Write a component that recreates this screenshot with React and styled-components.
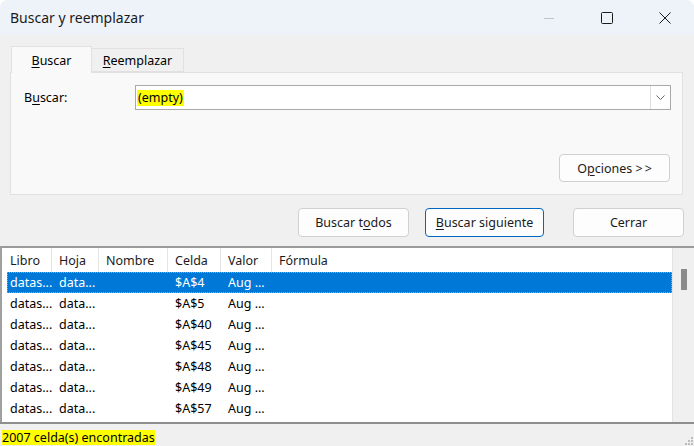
import React from 'react';
import styled, { createGlobalStyle } from 'styled-components';

const rows = [
  ['datas...', 'data...', '', '$A$4', 'Aug ...'],
  ['datas...', 'data...', '', '$A$5', 'Aug ...'],
  ['datas...', 'data...', '', '$A$40', 'Aug ...'],
  ['datas...', 'data...', '', '$A$45', 'Aug ...'],
  ['datas...', 'data...', '', '$A$48', 'Aug ...'],
  ['datas...', 'data...', '', '$A$49', 'Aug ...'],
  ['datas...', 'data...', '', '$A$57', 'Aug ...'],
];

const headers = ['Libro', 'Hoja', 'Nombre', 'Celda', 'Valor', 'Fórmula'];

const App = () => {
  return (
    <>
      <GlobalStyle />
      <Window>
        <TitleBar>
          <Title>Buscar y reemplazar</Title>
          <Controls>
            <ControlButton>
              <svg width="12" height="12" viewBox="0 0 12 12">
                <path d="M1 6.5h10" stroke="#c4c4c4" strokeWidth="1" />
              </svg>
            </ControlButton>
            <ControlButton>
              <svg width="12" height="12" viewBox="0 0 12 12">
                <rect x="0.5" y="0.5" width="11" height="11" rx="1" fill="none" stroke="#1b1b1b" strokeWidth="1" />
              </svg>
            </ControlButton>
            <ControlButton>
              <svg width="12" height="12" viewBox="0 0 12 12">
                <path d="M0.5 0.5l11 11M11.5 0.5l-11 11" stroke="#1b1b1b" strokeWidth="1" />
              </svg>
            </ControlButton>
          </Controls>
        </TitleBar>

        <Body>
          <Tabs>
            <Tab $active><u>B</u>uscar</Tab>
            <Tab><u>R</u>eemplazar</Tab>
          </Tabs>
          <Panel>
            <FieldRow>
              <Label>B<u>u</u>scar:</Label>
              <Combo>
                <Highlight>(empty)</Highlight>
                <DropButton>
                  <svg width="9" height="5" viewBox="0 0 9 5">
                    <path d="M0.5 0.5l4 4 4-4" fill="none" stroke="#666" strokeWidth="1" />
                  </svg>
                </DropButton>
              </Combo>
            </FieldRow>
            <OptionsRow>
              <Button $w={111}>O<u>p</u>ciones&nbsp;<Arrows>&gt;&gt;</Arrows></Button>
            </OptionsRow>
          </Panel>
          <ButtonRow>
            <Button $w={111}>Buscar t<u>o</u>dos</Button>
            <Button $w={119} $primary><u>B</u>uscar siguiente</Button>
            <Button $w={111} $gap={29}>Cerrar</Button>
          </ButtonRow>
        </Body>

        <List>
          <ListMain>
            <HeaderRow>
              {headers.map((h, i) => (
                <HeaderCell key={h} $first={i === 0}>{h}</HeaderCell>
              ))}
            </HeaderRow>
            {rows.map((r, i) => (
              <Row key={i} $selected={i === 0}>
                {r.map((c, j) => (
                  <Cell key={j} $first={j === 0}>{c}</Cell>
                ))}
                <Cell />
              </Row>
            ))}
          </ListMain>
          <ScrollTrack>
            <Thumb />
          </ScrollTrack>
        </List>

        <StatusBar>
          <StatusText>2007 celda(s) encontradas</StatusText>
          <Grip>
            <svg width="9" height="10" viewBox="0 0 9 10">
              <rect x="6" y="1" width="2" height="2" fill="#bdbdbd" />
              <rect x="3" y="4" width="2" height="2" fill="#bdbdbd" />
              <rect x="6" y="4" width="2" height="2" fill="#bdbdbd" />
              <rect x="0" y="7" width="2" height="2" fill="#bdbdbd" />
              <rect x="3" y="7" width="2" height="2" fill="#bdbdbd" />
              <rect x="6" y="7" width="2" height="2" fill="#bdbdbd" />
            </svg>
          </Grip>
        </StatusBar>
      </Window>
    </>
  );
};

export default App;

const GlobalStyle = createGlobalStyle`
  html, body {
    margin: 0;
    padding: 0;
    background: #ffffff;
  }
  body {
    font-family: "Noto Sans", "Open Sans", sans-serif;
    font-size: 12.5px;
    color: #000;
  }
  u {
    text-underline-offset: 2px;
  }
`

const Window = styled.div`
  width: 694px;
  height: 446px;
  display: flex;
  flex-direction: column;
  background: #f0f0f0;
  border-radius: 8px 8px 0 0;
  overflow: hidden;
`

const TitleBar = styled.div`
  height: 35px;
  flex: none;
  display: flex;
  align-items: center;
  padding-left: 10px;
  background: #eef3fa;
`

const Title = styled.div`
  font-size: 14px;
  color: #1b1b1b;
`

const Controls = styled.div`
  margin-left: auto;
  display: flex;
  height: 100%;
`

const ControlButton = styled.div`
  width: 58px;
  height: 100%;
  display: flex;
  align-items: center;
  justify-content: center;
`

const Body = styled.div`
  flex: none;
  display: flex;
  flex-direction: column;
  padding: 11px 11px 9px 10px;
`

const Tabs = styled.div`
  display: flex;
  align-items: flex-end;
  height: 26px;
  padding-left: 1px;
`

const Tab = styled.div`
  box-sizing: border-box;
  height: ${p => (p.$active ? '27px' : '24px')};
  width: ${p => (p.$active ? '81px' : '92px')};
  margin-bottom: ${p => (p.$active ? '-1px' : '0')};
  position: relative;
  z-index: ${p => (p.$active ? 2 : 1)};
  display: flex;
  align-items: center;
  justify-content: center;
  background: ${p => (p.$active ? '#f9f9f9' : '#f0f0f0')};
  border: 1px solid #e1e1e1;
  border-bottom: ${p => (p.$active ? 'none' : '1px solid #e1e1e1')};
  border-left: ${p => (p.$active ? '1px solid #e1e1e1' : 'none')};
  padding-top: ${p => (p.$active ? '0' : '1px')};
`

const Panel = styled.div`
  box-sizing: border-box;
  height: 123px;
  display: flex;
  flex-direction: column;
  background: #f9f9f9;
  border: 1px solid #e1e1e1;
  padding: 12px 12px 12px 13px;
`

const FieldRow = styled.div`
  display: flex;
  align-items: center;
  margin-right: -1px;
`

const Label = styled.div`
  width: 111px;
  flex: none;
`

const Combo = styled.div`
  box-sizing: border-box;
  flex: 1;
  height: 25px;
  display: flex;
  align-items: center;
  background: #ffffff;
  border: 1px solid #a9a9a9;
  padding-left: 1px;
`

const Highlight = styled.span`
  background: #ffff00;
  line-height: 16px;
  padding: 0 1px;
`

const DropButton = styled.div`
  box-sizing: border-box;
  margin-left: auto;
  width: 20px;
  height: 23px;
  display: flex;
  align-items: center;
  justify-content: center;
  border-left: 1px solid #dedede;
  background: #ffffff;
`

const OptionsRow = styled.div`
  margin-top: auto;
  display: flex;
  justify-content: flex-end;
`

const Arrows = styled.span`
  letter-spacing: 2px;
  margin-right: -2px;
`

const Button = styled.div`
  box-sizing: border-box;
  width: ${p => p.$w}px;
  height: 28px;
  margin-left: ${p => (p.$gap ? `${p.$gap - 16}px` : '0')};
  display: flex;
  align-items: center;
  justify-content: center;
  background: #fdfdfd;
  border: 1px solid ${p => (p.$primary ? '#0067c0' : '#d0d0d0')};
  border-radius: 4px;
  color: #1b1b1b;
`

const ButtonRow = styled.div`
  margin-top: 13px;
  margin-right: -1px;
  display: flex;
  justify-content: flex-end;
  gap: 16px;

  & > div {
    height: 29px;
  }
`

const List = styled.div`
  flex: 1;
  min-height: 0;
  display: flex;
  background: #ffffff;
  border-top: 2px solid #9a9a9a;
  border-left: 2px solid #a0a0a0;
`

const ListMain = styled.div`
  flex: 1;
  min-width: 0;
  overflow: hidden;
`

const HeaderRow = styled.div`
  display: grid;
  grid-template-columns: 50px 47px 69px 53px 51px 1fr;
  height: 24px;
`

const HeaderCell = styled.div`
  display: flex;
  align-items: center;
  padding-left: ${p => (p.$first ? '8px' : '7px')};
  border-right: 1px solid #e5e5e5;
  color: #1b1b1b;
  &:last-child {
    border-right: none;
  }
`

const Row = styled.div`
  box-sizing: border-box;
  display: grid;
  grid-template-columns: 45px 47px 69px 53px 51px 1fr;
  height: 21px;
  margin-left: 5px;
  background: ${p => (p.$selected ? '#0078d7' : 'transparent')};
  color: ${p => (p.$selected ? '#ffffff' : '#000000')};
  border: 1px dotted ${p => (p.$selected ? '#f7931e' : 'transparent')};
`

const Cell = styled.div`
  display: flex;
  align-items: center;
  padding-left: ${p => (p.$first ? '2px' : '6px')};
  white-space: nowrap;
  overflow: hidden;
`

const ScrollTrack = styled.div`
  width: 21px;
  flex: none;
  display: flex;
  flex-direction: column;
  align-items: center;
  background: #f0f0f0;
  border-left: 1px solid #e3e3e3;
`

const Thumb = styled.div`
  width: 6px;
  height: 21px;
  margin-top: 21px;
  background: #8b8b8b;
`

const StatusBar = styled.div`
  box-sizing: border-box;
  height: 24px;
  flex: none;
  position: relative;
  display: flex;
  align-items: flex-end;
  padding: 0 0 1px 2px;
  background: #f0f0f0;
  border-top: 2px solid #8e8e8e;
`

const StatusText = styled.span`
  background: #ffff00;
  line-height: 15px;
`

const Grip = styled.div`
  position: absolute;
  right: 0;
  bottom: 0;
  display: flex;
`
